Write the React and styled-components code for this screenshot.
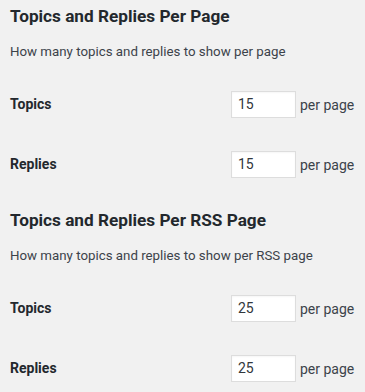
import React from 'react'
import styled, { createGlobalStyle } from 'styled-components'

const Global = createGlobalStyle`
    body {
        margin: 0;
        background: #f1f1f1;
        font-family: Roboto, "Liberation Sans", sans-serif;
        color: #23282d;
    }
`

const Page = styled.div`
    padding: 5px 0 0 10px;
`

const Section = styled.section`
    padding-bottom: 15px;
`

const Heading = styled.h2`
    margin: 0 0 15px;
    font-size: 17.2px;
    line-height: 22px;
    font-weight: 700;
    color: #23282d;
`

const Desc = styled.p`
    margin: 0 0 12px;
    font-size: 13.3px;
    line-height: 20px;
    color: #3c434a;
`

const Row = styled.div`
    display: grid;
    grid-template-columns: 221px auto;
    align-items: center;
    height: 60px;
`

const Label = styled.label`
    font-size: 14px;
    font-weight: 700;
    color: #23282d;
`

const Field = styled.div`
    display: flex;
    align-items: center;
`

const Input = styled.input`
    box-sizing: border-box;
    width: 65px;
    height: 27px;
    padding: 0 6px;
    border: 1px solid #ddd;
    background: #fff;
    font-family: inherit;
    font-size: 14px;
    color: #32373c;
    outline: none;
    box-shadow: inset 0 1px 2px rgba(0, 0, 0, 0.04);
`

const Unit = styled.span`
    margin-left: 4px;
    padding-top: 2px;
    font-size: 14px;
    color: #3c434a;
`

const sections = [
    {
        title: 'Topics and Replies Per Page',
        desc: 'How many topics and replies to show per page',
        topics: 15,
        replies: 15,
    },
    {
        title: 'Topics and Replies Per RSS Page',
        desc: 'How many topics and replies to show per RSS page',
        topics: 25,
        replies: 25,
    },
]

const SettingRow = ({ label, value }) => (
    <Row>
        <Label>{label}</Label>
        <Field>
            <Input type="text" defaultValue={value} />
            <Unit>per page</Unit>
        </Field>
    </Row>
)

export default function App() {
    return (
        <Page>
            <Global />
            {sections.map(s => (
                <Section key={s.title}>
                    <Heading>{s.title}</Heading>
                    <Desc>{s.desc}</Desc>
                    <SettingRow label="Topics" value={s.topics} />
                    <SettingRow label="Replies" value={s.replies} />
                </Section>
            ))}
        </Page>
    )
}
